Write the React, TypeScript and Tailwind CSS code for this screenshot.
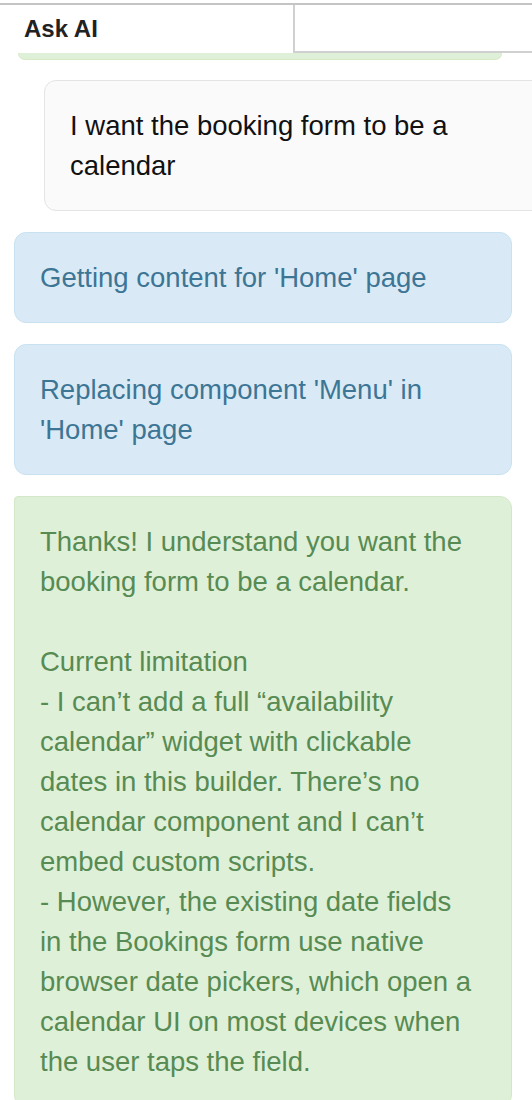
export default function App() {
  const font = { fontFamily: '"Liberation Sans", Arial, sans-serif' }
  return (
    <div className="w-[532px] h-[1100px] overflow-hidden bg-white" style={font}>
      {/* header */}
      <div className="relative z-10 mt-[3px] border-t-2 border-[#c4c4c4] bg-white flex h-[50px]">
        <div className="w-[293px] flex items-center pl-[24px] text-[24px] font-bold text-[#222]">
          Ask AI
        </div>
        <div className="flex-1 border-l-2 border-b-2 border-[#d0d0d0]" />
      </div>

      {/* previous message peeking below header */}
      <div className="mx-[18px] mr-[30px] h-[7px] bg-[#dff0d8] border-b border-x border-[#d6e9c6] rounded-b-xl" />

      <div className="flex flex-col gap-[21px] pt-[20px]">
        <div className="ml-[44px] w-[530px] shrink-0 rounded-xl border border-[#e4e4e4] bg-[#fafafa] pl-[25px] pt-[25px] pb-[24px] text-[27.5px] leading-[40px] text-[#111]">
          <div className="w-[440px]">I want the booking form to be a calendar</div>
        </div>

        <div className="mx-[14px] w-[498px] rounded-xl border border-[#c9e2f1] bg-[#d9eaf6] pl-[25px] pr-[36px] pt-[25px] pb-[24px] text-[27.5px] leading-[40px] text-[#3d7595]">
          Getting content for 'Home' page
        </div>

        <div className="mx-[14px] w-[498px] rounded-xl border border-[#c9e2f1] bg-[#d9eaf6] pl-[25px] pr-[36px] pt-[25px] pb-[24px] text-[27.5px] leading-[40px] text-[#3d7595]">
          Replacing component 'Menu' in 'Home' page
        </div>

        <div className="mx-[14px] w-[498px] rounded-xl rounded-tl-sm border border-[#d3e8c8] bg-[#dff0d8] pl-[25px] pr-[36px] pt-[25px] pb-[24px] text-[27.5px] leading-[40px] text-[#578b53] whitespace-pre-line">
          {`Thanks! I understand you want the booking form to be a calendar.

Current limitation
- I can’t add a full “availability calendar” widget with clickable dates in this builder. There’s no calendar component and I can’t embed custom scripts.
- However, the existing date fields in the Bookings form use native browser date pickers, which open a calendar UI on most devices when the user taps the field.`}
        </div>
      </div>
    </div>
  )
}
